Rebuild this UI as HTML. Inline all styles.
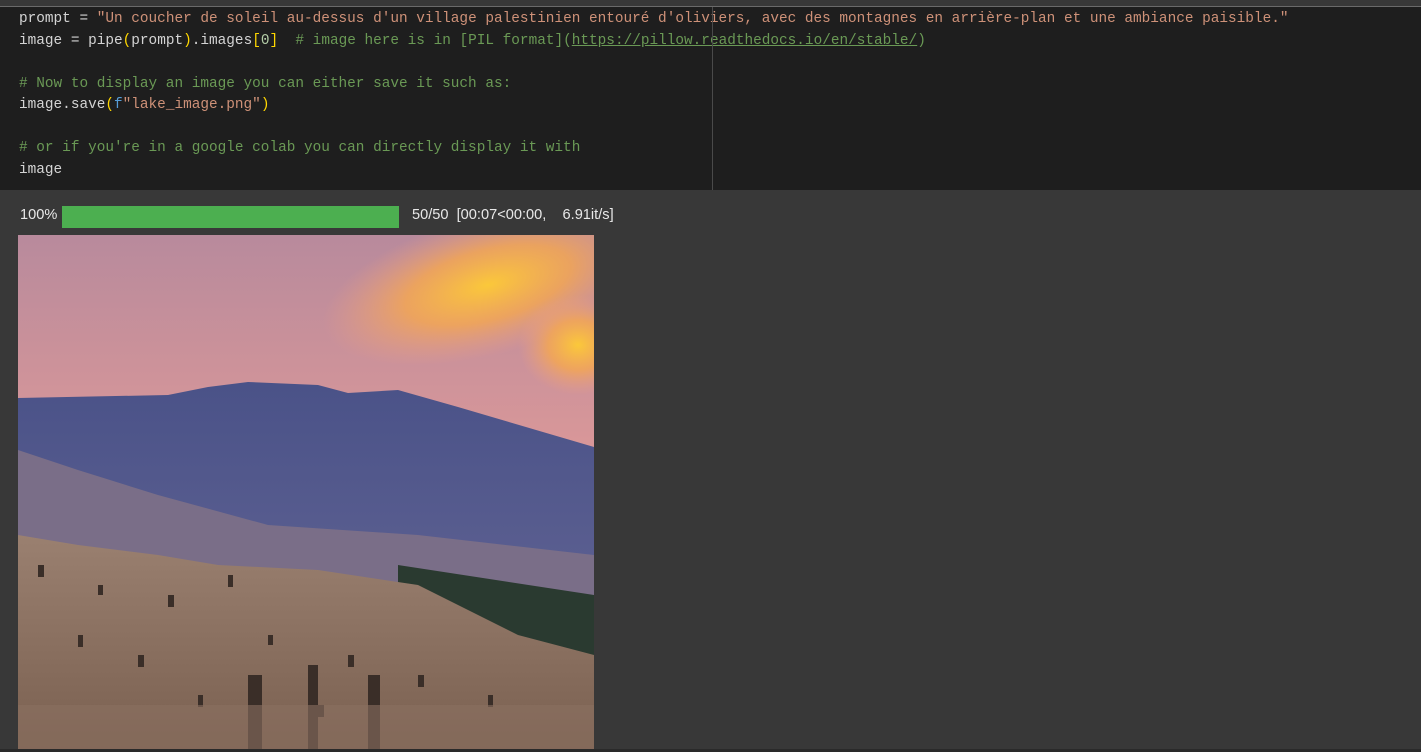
<!DOCTYPE html>
<html><head><meta charset="utf-8"><style>
html,body{margin:0;padding:0;width:1421px;height:752px;overflow:hidden;background:#383838}
.top{position:absolute;left:0;top:0;width:1421px;height:6px;background:#383838;border-bottom:1px solid #6a6a6a}
.code{position:absolute;left:0;top:7px;width:1421px;height:183px;background:#1e1e1e}
.ruler{position:absolute;left:712px;top:7px;width:1px;height:183px;background:#4a4a4a}
pre{position:absolute;left:19px;top:2px;margin:0;font-family:"Liberation Mono",monospace;font-size:14.4px;line-height:21.5px;color:#d4d4d4}
.s{color:#ce9178}.c{color:#6a9955}.b{color:#ffd700}.f{color:#569cd6}.u{text-decoration:underline}
.prog{position:absolute;top:207px;font-family:"Liberation Sans",sans-serif;font-size:14.6px;color:#e8e8e8}
.bar{position:absolute;left:62px;top:206px;width:337px;height:22px;background:#4caf50}
.img{position:absolute;left:18px;top:235px;width:576px;height:514px}
.bot{position:absolute;left:0;top:749px;width:1421px;height:3px;background:#2a2a2a}
</style></head><body>
<div class="top"></div>
<div class="code"><pre>prompt = <span class="s">"Un coucher de soleil au-dessus d'un village palestinien entouré d'oliviers, avec des montagnes en arrière-plan et une ambiance paisible."</span>
image = pipe<span class="b">(</span>prompt<span class="b">)</span>.images<span class="b">[</span><span style="color:#b5cea8">0</span><span class="b">]</span>  <span class="c"># image here is in [PIL format](<span class="u">https://pillow.readthedocs.io/en/stable/</span>)</span>

<span class="c"># Now to display an image you can either save it such as:</span>
image.save<span class="b">(</span><span class="f">f</span><span class="s">"lake_image.png"</span><span class="b">)</span>

<span class="c"># or if you're in a google colab you can directly display it with</span>
image</pre></div>
<div class="ruler"></div>
<div class="prog" style="left:20px">100%</div>
<div class="bar"></div>
<div class="prog" style="left:412px">50/50&nbsp; [00:07&lt;00:00, &nbsp;&nbsp; 6.91it/s]</div>
<svg class="img" viewBox="0 0 576 514" preserveAspectRatio="none">
<defs>
<linearGradient id="sky" x1="0" y1="0" x2="0" y2="1"><stop offset="0" stop-color="#b88a9c"/><stop offset="0.5" stop-color="#e09a98"/><stop offset="1" stop-color="#f0a080"/></linearGradient>
<radialGradient id="sun" cx="0.5" cy="0.5" r="0.5"><stop offset="0" stop-color="#fbc83a"/><stop offset="0.5" stop-color="#f6a850" stop-opacity="0.8"/><stop offset="1" stop-color="#f0a080" stop-opacity="0"/></radialGradient>
<linearGradient id="mtn" x1="0" y1="0" x2="0" y2="1"><stop offset="0" stop-color="#4a5288"/><stop offset="1" stop-color="#6a6a98"/></linearGradient>
<linearGradient id="vil" x1="0" y1="0" x2="0" y2="1"><stop offset="0" stop-color="#9a8070"/><stop offset="1" stop-color="#7a6050"/></linearGradient>
</defs>
<rect width="576" height="514" fill="url(#sky)"/>
<ellipse cx="470" cy="50" rx="170" ry="70" fill="url(#sun)" transform="rotate(-15 470 50)"/>
<ellipse cx="560" cy="110" rx="60" ry="50" fill="url(#sun)"/>
<path d="M0 163 L150 160 L190 152 L230 147 L300 150 L330 158 L380 155 L440 172 L576 212 L576 514 L0 514Z" fill="url(#mtn)"/>
<path d="M0 215 L60 235 L140 260 L250 290 L400 300 L576 320 L576 514 L0 514Z" fill="#7a6e88"/>
<path d="M380 330 L576 360 L576 514 L380 514Z" fill="#2a3a30"/>
<path d="M0 300 L60 310 L140 320 L200 330 L300 335 L400 350 L500 400 L576 420 L576 514 L0 514Z" fill="url(#vil)"/>
<g fill="#3a2e28">
<rect x="20" y="330" width="6" height="12"/><rect x="80" y="350" width="5" height="10"/><rect x="150" y="360" width="6" height="12"/><rect x="210" y="340" width="5" height="12"/><rect x="60" y="400" width="5" height="12"/><rect x="120" y="420" width="6" height="12"/><rect x="250" y="400" width="5" height="10"/><rect x="330" y="420" width="6" height="12"/><rect x="400" y="440" width="6" height="12"/><rect x="470" y="460" width="5" height="12"/><rect x="180" y="460" width="5" height="12"/><rect x="300" y="470" width="6" height="12"/>
<rect x="230" y="440" width="14" height="74"/><rect x="290" y="430" width="10" height="84"/><rect x="350" y="440" width="12" height="74"/>
</g>
<rect x="0" y="470" width="576" height="44" fill="#8a7060" opacity="0.6"/>
</svg>
<div class="bot"></div>
</body></html>
